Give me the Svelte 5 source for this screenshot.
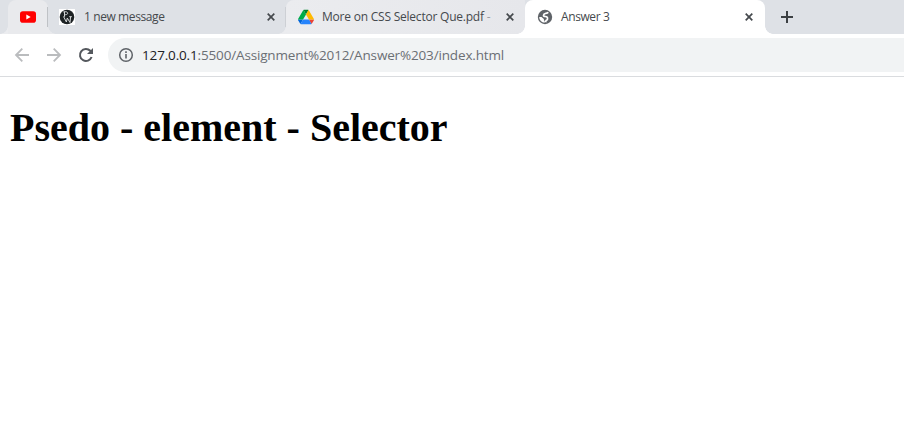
<script>
  const host = '127.0.0.1';
  const path = ':5500/Assignment%2012/Answer%203/index.html';
</script>

{#snippet close()}
  <svg class="close" width="8" height="8" viewBox="0 0 8 8"><path d="M.7.7 7.3 7.3M7.3.7.7 7.3" stroke="#45494d" stroke-width="1.7" fill="none" /></svg>
{/snippet}

<div class="browser">
  <div class="strip">
    <div class="tab pinned">
      <svg width="16" height="12" viewBox="0 0 16 12"><rect width="16" height="11.4" y=".3" rx="2.8" fill="#f00" /><path d="M6.3 3.4 10.7 6 6.3 8.6z" fill="#fff" /></svg>
    </div>
    <div class="tab message">
      <svg class="icon" width="16" height="16" viewBox="0 0 16 16">
        <rect width="16" height="16" fill="#fff" />
        <circle cx="8" cy="8" r="7.3" fill="#1d2224" />
        <path d="M5.5 2.8v5M4.3 3c3-.9 4.8.2 4.3 1.6-.3.9-1.5 1.2-2.9 1.1M4.5 7.5 7.4 13l.9-4 2.700 4.500.6-5.800M10.200 7.700h2.700" fill="none" stroke="#d5d8d9" stroke-width="1" />
      </svg>
      <span class="title t1">1 new message</span>
      {@render close()}
    </div>
    <div class="tab drive">
      <svg class="icon" width="16" height="16" viewBox="0 0 87.3 78">
        <path d="m6.6 66.85 3.85 6.65c.8 1.4 1.95 2.5 3.3 3.3L27.5 53H0c0 1.55.4 3.1 1.2 4.5z" fill="#0066da" />
        <path d="M43.65 25 29.9 1.2c-1.35.8-2.5 1.9-3.3 3.3L1.2 48.5A9 9 0 0 0 0 53h27.5z" fill="#00ac47" />
        <path d="M73.55 76.8c1.35-.8 2.5-1.9 3.3-3.3l1.6-2.75L86.1 57.5c.8-1.4 1.2-2.95 1.2-4.5H59.8l5.85 11.5z" fill="#ea4335" />
        <path d="M43.65 25 57.4 1.2C56.05.4 54.5 0 52.9 0H34.4c-1.6 0-3.15.45-4.5 1.2z" fill="#00832d" />
        <path d="M59.8 53H27.5L13.75 76.8c1.35.8 2.9 1.2 4.5 1.2h50.8c1.6 0 3.15-.45 4.5-1.2z" fill="#2684fc" />
        <path d="m73.4 26.5-12.7-22c-.8-1.4-1.95-2.5-3.3-3.3L43.65 25 59.8 53h27.45c0-1.55-.4-3.1-1.2-4.5z" fill="#ffba00" />
      </svg>
      <span class="title t2">More on CSS Selector Que.pdf <i>-</i></span>
      {@render close()}
    </div>
    <div class="tab active">
      <svg class="icon" width="16" height="16" viewBox="0 0 16 16">
        <circle cx="8" cy="8" r="7.2" fill="#5f6368" />
        <path d="M11.200 3.200C10.500 4.300 9.500 4.300 8.300 4.500 7.200 4.700 6.700 5.300 6.500 6.400 6.400 7.400 7.100 7.500 8.200 7.500 10.300 7.500 10.700 8.600 10.500 10.100 10.300 11.100 9.500 11.200 8.900 11.800L8.600 13.200" fill="none" stroke="#fff" stroke-width="1.700" />
        <path d="M2.200 7.900H4.500L6.900 10v1.300l.8.800v1.700A5.800 5.800 0 0 1 2.200 7.900z" fill="#fff" />
      </svg>
      <span class="title t3">Answer 3</span>
      {@render close()}
    </div>
    <svg class="plus" width="12" height="12" viewBox="0 0 12 12"><path d="M6 0v12M0 6h12" stroke="#3c4043" stroke-width="2" /></svg>
  </div>

  <div class="toolbar">
    <svg class="nav" width="16" height="16" viewBox="0 0 16 16"><path d="M15 8H2M8.300 1.700 2 8l6.300 6.300" fill="none" stroke="#babcbe" stroke-width="1.800" /></svg>
    <svg class="nav" width="16" height="16" viewBox="0 0 16 16"><path d="M1 8h13M7.700 1.700 14 8l-6.300 6.300" fill="none" stroke="#babcbe" stroke-width="1.800" /></svg>
    <svg class="nav" width="16" height="16" viewBox="0 0 16 16"><path d="M13.600 10A6 6 0 1 1 12.300 3.800L14 5.500" fill="none" stroke="#54585d" stroke-width="2" /><path d="M15 1v6H9z" fill="#54585d" /></svg>
    <div class="address">
      <svg width="16" height="16" viewBox="0 0 16 16"><circle cx="8" cy="8" r="6.300" fill="none" stroke="#5f6368" stroke-width="1.500" /><path d="M8 7v4.500M8 4.300v1.600" stroke="#5f6368" stroke-width="1.600" /></svg>
      <span class="url"><b>{host}</b>{path}</span>
    </div>
  </div>

  <main><h1>Psedo - element - Selector</h1></main>
</div>

<style>
  :global(body) { margin: 0; background: #fff; }
  .browser { width: 904px; height: 429px; overflow: hidden; background: #fff; font-family: "Open Sans", "Noto Sans", sans-serif; }
  svg { display: block; flex: none; }
  .strip { height: 34px; display: flex; background: #dee1e6; padding-left: 8px; }
  .tab { position: relative; height: 34px; display: flex; align-items: center; box-sizing: border-box; flex: none; padding-left: 12px; }
  .pinned { width: 40px; background: #e9eaed; border-radius: 8px 8px 0 0; }
  .message { width: 238px; padding-left: 11px; }
  .message::before, .message::after { content: ""; position: absolute; top: 7px; width: 1px; height: 20px; background: #bfc2c6; }
  .message::before { left: -1px; }
  .message::after { right: 0; background: #cdd0d5; }
  .drive { width: 239px; padding-left: 12px; background: linear-gradient(90deg, #ebecef, #e6e7eb); border-radius: 8px 0 8px 0; }
  .active { width: 240px; padding-left: 12px; background: #fff; border-radius: 8px 8px 0 0; }
  .active::before, .active::after, .pinned::before, .pinned::after, .drive::before { content: ""; position: absolute; bottom: 0; width: 8px; height: 8px; }
  .active::after { right: -8px; background: radial-gradient(circle at 100% 0, transparent 7.5px, #fff 8px); }
  .active::before { left: -8px; background: radial-gradient(circle at 0 0, transparent 7.5px, #fff 8px); }
  .pinned::before, .drive::before { left: -8px; background: radial-gradient(circle at 0 0, transparent 7.5px, #ebecef 8px); }
  .pinned::after { right: -8px; background: radial-gradient(circle at 100% 0, transparent 7.5px, #e9eaed 8px); }
  .title { margin-left: 9px; width: 174px; flex: none; color: #45494d; font-size: 12px; line-height: 16px; white-space: nowrap; }
  .title i { font-style: normal; color: #9b9ea3; }
  .t1 { letter-spacing: -0.4px; }
  .t2 { margin-left: 8px; width: 175px; letter-spacing: -0.22px; }
  .t3 { margin-left: 8px; width: 175px; letter-spacing: -0.4px; }
  .close { margin-left: 9px; }
  .plus { margin: 11px 0 0 16px; }
  .toolbar { height: 42px; display: flex; align-items: center; padding-left: 14px; gap: 16px; border-bottom: 1px solid #dadcdf; }
  .address { flex: 1; height: 34px; margin-left: -2px; display: flex; align-items: center; box-sizing: border-box; padding-left: 10px; border-radius: 17px 0 0 17px; background: #f1f3f4; }
  .url { margin-left: 8px; white-space: nowrap; font-size: 13.5px; line-height: 20px; letter-spacing: -0.155px; color: #6b6f74; }
  .url b { font-weight: 400; color: #202124; }
  main { display: flex; padding: 28px 10px 0; }
  h1 { margin: 0; font: bold 40px/46px "Liberation Serif", serif; color: #000; white-space: nowrap; }
</style>
